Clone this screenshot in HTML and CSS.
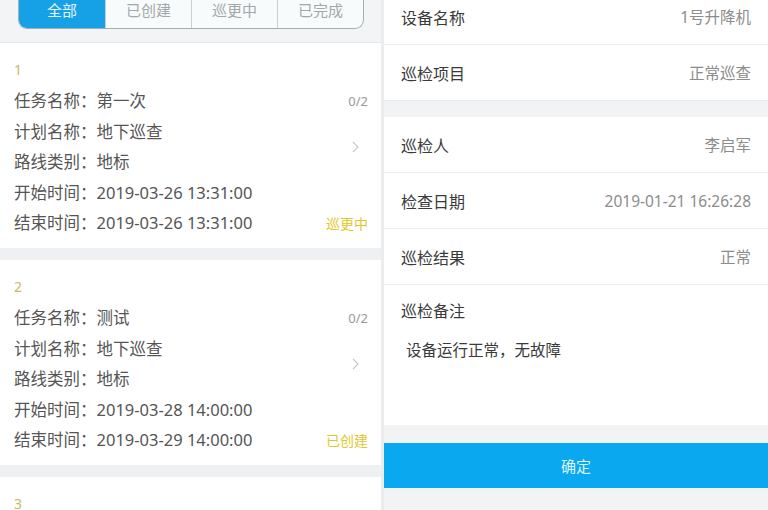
FILE: index.html
```html
<!DOCTYPE html>
<html lang="zh-CN">
<head>
  <meta charset="UTF-8">
  <title>巡检任务</title>
  <link rel="stylesheet" href="styles.css">
</head>
<body>

  <div class="screen">

    <section class="tasks">
      <div class="tabs-bar">
        <div class="tabs">
          <span class="tab active">全部</span>
          <span class="tab">已创建</span>
          <span class="tab">巡更中</span>
          <span class="tab">已完成</span>
        </div>
      </div>

      <div class="task">
        <div class="task-no">1</div>
        <div class="task-body">
          <ul class="task-fields">
            <li>任务名称：第一次</li>
            <li>计划名称：地下巡查</li>
            <li>路线类别：地标</li>
            <li>开始时间：2019-03-26 13:31:00</li>
            <li>结束时间：2019-03-26 13:31:00</li>
          </ul>
          <div class="task-meta">
            <span class="progress">0/2</span>
            <svg class="chevron" width="7" height="12" viewBox="0 0 7 12"><path d="M1 1l5 5-5 5" fill="none" stroke="#c8c8c8" stroke-width="1.1"/></svg>
            <span class="status">巡更中</span>
          </div>
        </div>
      </div>

      <div class="task">
        <div class="task-no">2</div>
        <div class="task-body">
          <ul class="task-fields">
            <li>任务名称：测试</li>
            <li>计划名称：地下巡查</li>
            <li>路线类别：地标</li>
            <li>开始时间：2019-03-28 14:00:00</li>
            <li>结束时间：2019-03-29 14:00:00</li>
          </ul>
          <div class="task-meta">
            <span class="progress">0/2</span>
            <svg class="chevron" width="7" height="12" viewBox="0 0 7 12"><path d="M1 1l5 5-5 5" fill="none" stroke="#c8c8c8" stroke-width="1.1"/></svg>
            <span class="status">已创建</span>
          </div>
        </div>
      </div>

      <div class="task">
        <div class="task-no">3</div>
      </div>
    </section>

    <section class="detail">
      <div class="group first">
        <div class="field"><span class="label">设备名称</span><span class="value">1号升降机</span></div>
        <div class="field"><span class="label">巡检项目</span><span class="value">正常巡查</span></div>
      </div>

      <div class="group">
        <div class="field"><span class="label">巡检人</span><span class="value">李启军</span></div>
        <div class="field"><span class="label">检查日期</span><span class="value">2019-01-21 16:26:28</span></div>
        <div class="field"><span class="label">巡检结果</span><span class="value">正常</span></div>
        <div class="remark">
          <div class="label">巡检备注</div>
          <p class="remark-text">设备运行正常，无故障</p>
        </div>
      </div>

      <div class="footer">
        <button class="confirm">确定</button>
      </div>
    </section>

  </div>

</body>
</html>
```

FILE: styles.css
```css
body {
  margin: 0;
  font-family: "Noto Sans", "Noto Sans CJK SC", sans-serif;
  color: #444;
  background: #ebecee;
}

.screen {
  display: grid;
  grid-template-columns: 381px 384px;
  gap: 3px;
  width: 768px;
  height: 510px;
  overflow: hidden;
}

/* left: task list */

.tasks {
  background: #eff0f2;
  overflow: hidden;
}

.tabs-bar {
  display: flow-root;
  height: 42px;
  padding: 0 17px 0 18px;
  background: #f3f4f6;
  border-bottom: 1px solid #e4e5e7;
}

.tabs {
  display: grid;
  grid-template-columns: repeat(4, 1fr);
  height: 35px;
  margin-top: -7px;
  border: 1px solid #a4aeb3;
  border-top: none;
  border-radius: 0 0 9px 9px;
  overflow: hidden;
  background: #f8fbfc;
}

.tab {
  display: flex;
  align-items: center;
  justify-content: center;
  padding-bottom: 3px;
  font-size: 15px;
  color: #a3a7aa;
  border-left: 1px solid #c6d2d6;
}

.tab:first-child {
  border-left: none;
}

.tab.active {
  background: #16a1e6;
  color: #e6f6ff;
}

.task {
  background: #fff;
  padding: 17px 13px 9px 14px;
  margin-bottom: 12px;
}

.task-no {
  height: 20px;
  line-height: 20px;
  margin-bottom: 6px;
  font-size: 14px;
  color: #c7bb6a;
}

.task-body {
  display: flex;
  justify-content: space-between;
}

.task-fields {
  list-style: none;
  margin: 0;
  padding: 0;
  font-size: 16.5px;
  line-height: 30.6px;
  color: #555;
}

.task-meta {
  display: flex;
  flex-direction: column;
  align-items: flex-end;
}

.progress {
  line-height: 31px;
  font-size: 13px;
  color: #9a9a9a;
}

.chevron {
  margin: 24px 9px 0 0;
}

.status {
  margin-top: auto;
  line-height: 31px;
  font-size: 14px;
  color: #e3c72a;
}

/* right: inspection detail */

.detail {
  background: #f2f3f5;
  overflow: hidden;
}

.group {
  background: #fff;
  margin-bottom: 16px;
}

.group.first {
  margin-top: -11px;
}

.field {
  display: flex;
  justify-content: space-between;
  align-items: center;
  height: 55px;
  padding: 0 17px;
  border-bottom: 1px solid #ececec;
}

.label {
  font-size: 16px;
  color: #3a3a3a;
}

.value {
  font-size: 15.5px;
  color: #8c8c8c;
}

.remark {
  height: 140px;
  padding: 14px 17px 0;
  box-sizing: border-box;
}

.remark .label {
  line-height: 24px;
}

.remark-text {
  margin: 15px 0 0 5px;
  line-height: 24px;
  font-size: 15.5px;
  color: #3a3a3a;
}

.footer {
  margin-top: -16px;
  padding-top: 18px;
}

.confirm {
  display: block;
  width: 100%;
  height: 45px;
  border: none;
  background: #0aa8ee;
  color: #dff5ff;
  font-family: inherit;
  font-size: 15px;
}
```
